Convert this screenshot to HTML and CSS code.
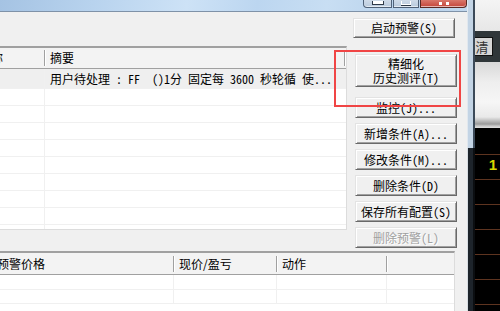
FILE: index.html
```html
<!DOCTYPE html>
<html lang="zh-CN">
<head>
  <meta charset="UTF-8">
  <title>预警设置</title>
  <link rel="stylesheet" href="styles.css">
</head>
<body>
  <div class="screen">
    <!-- Alert settings window -->
    <div class="window">
      <div class="client">
        <div class="titlebar">
          <div class="caption">
            <span class="cap cap-min"><i></i></span>
            <span class="cap cap-max"><i></i></span>
            <span class="cap cap-close"><i></i></span>
          </div>
        </div>

        <div class="body-area">
          <div class="upper">
            <!-- Condition list -->
            <div class="list list-top">
              <div class="lh">
                <div class="hc1"><span class="cut">名称</span></div>
                <span class="sep"></span>
                <div class="hc2">摘要</div>
                <span class="sep"></span>
              </div>
              <div class="row row-sel">
                <div class="c1"></div>
                <div class="c2 hw">用户待处理 : FF  ()1分 固定每 3600 秒轮循 使...</div>
              </div>
              <div class="row"><div class="c1"></div><div class="c2"></div></div>
              <div class="row"><div class="c1"></div><div class="c2"></div></div>
              <div class="row"><div class="c1"></div><div class="c2"></div></div>
              <div class="row"><div class="c1"></div><div class="c2"></div></div>
              <div class="row"><div class="c1"></div><div class="c2"></div></div>
              <div class="row"><div class="c1"></div><div class="c2"></div></div>
              <div class="row"><div class="c1"></div><div class="c2"></div></div>
              <div class="row"><div class="c1"></div><div class="c2"></div></div>
              <div class="row"><div class="c1"></div><div class="c2"></div></div>
            </div>

            <!-- Buttons -->
            <div class="btns">
              <button class="btn b-start hw">启动预警(S)</button>
              <button class="btn b-tall hw"><span>精细化</span><span>历史测评(T)</span></button>
              <button class="btn b-mid b-first hw">监控(J)...</button>
              <button class="btn b-mid hw">新增条件(A)...</button>
              <button class="btn b-mid hw">修改条件(M)...</button>
              <button class="btn b-mid hw">删除条件(D)</button>
              <button class="btn b-mid hw">保存所有配置(S)</button>
              <button class="btn b-mid hw" disabled>删除预警(L)</button>
            </div>
          </div>

          <!-- Alert list -->
          <div class="list list-bottom">
            <div class="bh">
              <div class="bh1"><span class="shift">预警价格</span></div>
              <span class="sep"></span>
              <div class="bh2">现价/盈亏</div>
              <span class="sep"></span>
              <div class="bh3">动作</div>
              <span class="sep"></span>
              <div class="bh4"></div>
            </div>
            <div class="brow brow-first"><div class="bc1"></div><div class="bc2"></div><div class="bc3"></div><div class="bc4"></div></div>
            <div class="brow"><div class="bc1"></div><div class="bc2"></div><div class="bc3"></div><div class="bc4"></div></div>
          </div>
        </div>
      </div>
      <div class="frame-right">
        <div class="frame-light"></div>
        <div class="frame-dark"></div>
      </div>
    </div>

    <!-- Application behind the window -->
    <div class="other-app">
      <div class="oa-top"></div>
      <div class="oa-bar"><span class="oa-btn">清</span></div>
      <div class="oa-mid"></div>
      <div class="oa-grid">
        <div class="oa-row oa-row-first"></div>
        <div class="oa-row"><span class="oa-num">1</span></div>
        <div class="oa-row"></div>
        <div class="oa-row"></div>
        <div class="oa-row"></div>
        <div class="oa-row"></div>
        <div class="oa-row"></div>
      </div>
    </div>
  </div>

  <!-- Red highlight annotation -->
  <div class="mark"></div>
</body>
</html>
```

FILE: styles.css
```css
/* General */
* {
  box-sizing: border-box;
}

body {
  margin: 0;
  width: 500px;
  height: 311px;
  overflow: hidden;
  position: relative;
  font-family: "Noto Sans CJK SC", sans-serif;
  font-size: 12px;
  color: #000;
}

.hw {
  font-feature-settings: "hwid";
}

.screen {
  display: flex;
  height: 311px;
}

/* Window */
.window {
  display: flex;
  width: 475px;
  flex-shrink: 0;
}

.client {
  width: 467px;
  display: flex;
  flex-direction: column;
}

.titlebar {
  height: 18px;
  border-bottom: 1px solid #7f92a8;
  background: linear-gradient(100deg, #a5c3e3 0%, #b8d3ee 20%, #cde2f6 40%, #bcd6f0 55%, #c8def3 70%, #b7d1eb 88%, #c2d8ee 100%);
  display: flex;
  justify-content: flex-end;
  align-items: flex-start;
}

.caption {
  display: flex;
  gap: 1px;
}

.cap {
  height: 8px;
  display: flex;
  justify-content: center;
  align-items: flex-end;
  border: 1px solid #4f6177;
  border-top: none;
  background: linear-gradient(#cfdbe8, #b9cadd);
  box-shadow: inset 0 -1px rgba(255, 255, 255, 0.6);
}

.cap i {
  display: block;
  height: 4px;
  border: 1px solid #2e3947;
  border-top: none;
  background: #fff;
  margin-bottom: 2px;
}

.cap-min {
  width: 29px;
  border-radius: 0 0 0 4px;
}

.cap-min i {
  width: 12px;
}

.cap-max {
  width: 26px;
}

.cap-max i {
  width: 10px;
  background: transparent;
  border-color: #fff;
  box-shadow: 0 1px #2e3947;
}

.cap-close {
  width: 47px;
  border-color: #5b2a24;
  border-radius: 0 0 4px 0;
  background: linear-gradient(#d9776b, #c4453a);
}

.cap-close i {
  width: 10px;
  height: 3px;
  border: none;
  background: linear-gradient(90deg, #fff 0 3px, transparent 3px 7px, #fff 7px);
}

.frame-right {
  width: 8px;
  display: flex;
  flex-direction: column;
}

.frame-light {
  height: 148px;
  background: linear-gradient(90deg, #e1e8ef 0 1px, #c3d4e5 1px 6px, #3c4a59 6px 8px);
}

.frame-dark {
  flex: 1;
  background: linear-gradient(90deg, #d7dde3 0 1px, #1d242b 1px 6px, #0b0e11 6px 8px);
}

.body-area {
  flex: 1;
  background: #f0f0f0;
}

.upper {
  display: flex;
  align-items: flex-start;
}

/* List views */
.list {
  background: #fff;
  overflow: hidden;
  border-top: 2px solid #a0a0a0;
}

.list-top {
  width: 347px;
  height: 184px;
  margin-top: 34px;
  border-right: 1px solid #dcdcdc;
  border-bottom: 1px solid #dcdcdc;
}

.lh,
.bh {
  display: flex;
  align-items: center;
  height: 21px;
  background: #f3f3f3;
  border-bottom: 1px solid #a0a0a0;
  line-height: 16px;
  white-space: nowrap;
}

.sep {
  width: 1px;
  height: 16px;
  background: #a0a0a0;
  box-shadow: 1px 0 #fff;
  flex-shrink: 0;
}

.hc1 {
  width: 44px;
  overflow: hidden;
}

.cut {
  margin-left: -21px;
}

.hc2 {
  width: 299px;
  padding-left: 5px;
}

.row {
  display: flex;
  height: 17px;
  border-bottom: 1px solid #f0f0f0;
}

.row-sel {
  height: 20px;
  background: #efefef;
  line-height: 19px;
}

.c1 {
  width: 45px;
  border-right: 1px solid #f0f0f0;
}

.c2 {
  flex: 1;
  padding-left: 5px;
  white-space: pre;
  overflow: hidden;
}

.list-bottom {
  width: 455px;
  height: 60px;
  margin-top: 3px;
  border-right: 1px solid #dcdcdc;
}

.bh {
  height: 22px;
}

.bh1 {
  width: 173px;
  overflow: hidden;
}

.shift {
  margin-left: -3px;
}

.bh2 {
  width: 102px;
  padding-left: 5px;
}

.bh3 {
  width: 109px;
  padding-left: 5px;
}

.bh4 {
  flex: 1;
}

.brow {
  display: flex;
  height: 14px;
  border-bottom: 1px solid #f0f0f0;
}

.brow-first {
  height: 15px;
}

.bc1 {
  width: 174px;
  border-right: 1px solid #f0f0f0;
}

.bc2 {
  width: 103px;
  border-right: 1px solid #f0f0f0;
}

.bc3 {
  width: 110px;
  border-right: 1px solid #f0f0f0;
}

.bc4 {
  flex: 1;
}

/* Buttons */
.btns {
  display: flex;
  flex-direction: column;
  align-items: flex-start;
  margin-left: 6px;
  padding-top: 6px;
  width: 106px;
}

.btn {
  width: 102px;
  padding: 0;
  display: flex;
  flex-direction: column;
  justify-content: center;
  align-items: center;
  font-family: "Noto Sans CJK SC", sans-serif;
  font-size: 12px;
  line-height: 14px;
  color: #000;
  background: #f0f0f0;
  border: 1px solid;
  border-color: #e3e3e3 #696969 #696969 #e3e3e3;
  box-shadow: inset 1px 1px #fff, inset -1px -1px #a0a0a0;
  white-space: nowrap;
}

.btn:disabled {
  color: #a0a0a0;
  text-shadow: 1px 1px #fff;
}

.b-start {
  height: 20px;
}

.b-tall {
  height: 33px;
  margin-top: 16px;
  margin-left: 2px;
  line-height: 14px;
}

.b-mid {
  height: 21px;
  margin-top: 5px;
  margin-left: 2px;
}

.b-first {
  margin-top: 10px;
}

/* Application behind */
.other-app {
  width: 25px;
  display: flex;
  flex-direction: column;
  overflow: hidden;
}

.oa-top {
  height: 31px;
  background: linear-gradient(#f4f4f4, #e7e7e7);
}

.oa-bar {
  height: 31px;
  background: #2f3639;
  display: flex;
  align-items: center;
}

.oa-btn {
  width: 22px;
  height: 19px;
  margin-left: -4px;
  flex-shrink: 0;
  border: 1px solid #111;
  background: #d6d6d6;
  color: #333;
  font-size: 13px;
  line-height: 17px;
  text-align: center;
}

.oa-mid {
  height: 66px;
  background: linear-gradient(#d8d8d8 0, #eeeeee 20px, #f6f6f6 40px, #e9e9e9 55px, #9a9a9a 62px, #c8c8c8 64px, #e0e0e0 66px);
}

.oa-grid {
  flex: 1;
  background: #000;
  padding-top: 2px;
}

.oa-row {
  height: 25px;
  border-bottom: 1px solid #5e3420;
  text-align: right;
  padding-right: 3px;
  line-height: 20px;
}

.oa-num {
  font-family: "Liberation Sans", sans-serif;
  font-weight: bold;
  font-size: 15px;
  color: #d8d800;
}

/* Annotation */
.mark {
  position: absolute;
  left: 334px;
  top: 50px;
  width: 127px;
  height: 57px;
  border: 2px solid #f04545;
}
```
